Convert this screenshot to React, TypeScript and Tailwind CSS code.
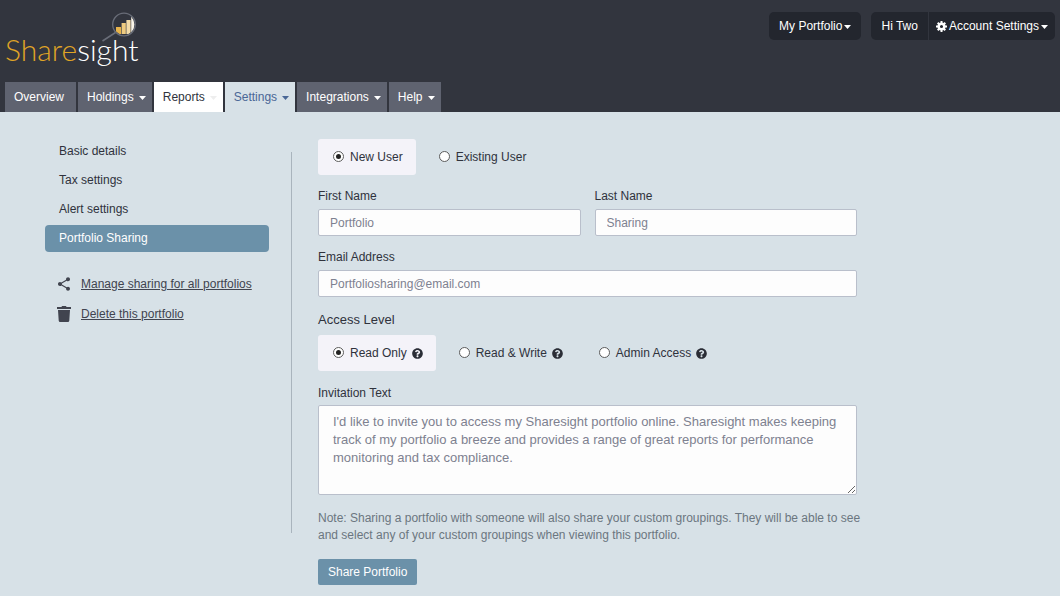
import { useState } from "react";
import type { ReactNode } from "react";
import clsx from "clsx";
import { FaQuestionCircle } from "react-icons/fa";
import { MdShare } from "react-icons/md";

const tabs = [
  { label: "Overview", caret: false },
  { label: "Holdings", caret: true },
  { label: "Reports", caret: true },
  { label: "Settings", caret: true },
  { label: "Integrations", caret: true },
  { label: "Help", caret: true },
];

const menuItems = [
  "Basic details",
  "Tax settings",
  "Alert settings",
  "Portfolio Sharing",
];

const invitation =
  "I'd like to invite you to access my Sharesight portfolio online. Sharesight makes keeping track of my portfolio a breeze and provides a range of great reports for performance monitoring and tax compliance.";

const Caret = ({ className = "text-white" }: { className?: string }) => (
  <svg width="7" height="4" viewBox="0 0 7 4" fill="currentColor" className={className}>
    <path d="M0 0h7L3.5 4z" />
  </svg>
);

const Logo = () => (
  <a
    href="#"
    aria-label="Sharesight"
    className="relative block w-36 pt-[31px] pb-px font-['Lato',sans-serif] text-[30px] leading-9 font-light text-white"
  >
    <span className="text-[#e0a526]">Share</span>sight
    <svg
      className="absolute top-3 left-24"
      width="36"
      height="30"
      viewBox="0 0 36 30"
      fill="none"
    >
      <clipPath id="lens">
        <circle cx="23" cy="12.5" r="10.5" />
      </clipPath>
      <g clipPath="url(#lens)">
        <path d="M15 15h5v7h-5z" fill="#e8b44c" />
        <path d="M20.6 11h4.2v11h-4.2z" fill="#eecb80" />
        <path d="M25.4 8h4.2v14h-4.2z" fill="#f3dca8" />
        <path d="M30.2 5h4v17h-4z" fill="#fbf6e8" />
      </g>
      <circle cx="23" cy="12.5" r="11.3" stroke="#696d78" strokeWidth="1.3" />
      <path d="M14.5 20.5 1.5 29" stroke="#696d78" strokeWidth="1.5" />
    </svg>
  </a>
);

const GearIcon = () => (
  <svg width="11" height="11" viewBox="0 0 22 22" fill="none" stroke="currentColor">
    <circle cx="11" cy="11" r="5.6" strokeWidth="5" />
    <path
      d="M11 0v4M11 18v4M0 11h4M18 11h4M3.4 3.4l2.8 2.8M15.8 15.8l2.8 2.8M3.4 18.6l2.8-2.8M15.8 6.2l2.8-2.8"
      strokeWidth="4"
    />
  </svg>
);

const TrashIcon = () => (
  <svg width="14" height="16" viewBox="0 0 14 16" fill="currentColor">
    <path d="M0 1h4.3l.9-1h3.6l.9 1H14v2H0zM1 4h12l-.7 10.5c0 .9-.6 1.5-1.5 1.5H3.2c-.9 0-1.5-.6-1.5-1.5z" />
  </svg>
);

interface ChoiceProps {
  name: string;
  label: string;
  checked: boolean;
  onSelect: () => void;
  help?: boolean;
}

const Choice = ({ name, label, checked, onSelect, help }: ChoiceProps) => (
  <label
    className={clsx(
      "flex h-9 items-center rounded-[3px] pr-[13px] pl-[15px]",
      checked && "bg-[#f4f3f9]",
    )}
  >
    <input
      type="radio"
      name={name}
      checked={checked}
      onChange={onSelect}
      className="mr-1.5 mb-0.5 grid size-[11px] appearance-none place-items-center rounded-full border border-[#5c5c5c] bg-white before:size-[5px] before:rounded-full checked:before:bg-[#222]"
    />
    {label}
    {help && <FaQuestionCircle className="ml-[5px] size-[11px] text-[#2a2d36]" />}
  </label>
);

interface FieldProps {
  id: string;
  label: string;
  value: string;
  type?: string;
}

const Field = ({ id, label, value, type = "text" }: FieldProps) => (
  <div className="flex min-w-0 flex-1 flex-col gap-1">
    <label htmlFor={id}>{label}</label>
    <input
      id={id}
      type={type}
      defaultValue={value}
      className="h-[27px] w-full rounded-xs border border-[#b9bfcb] bg-[#fdfdfd] px-[11px] text-[#7e8190]"
    />
  </div>
);

const TopButton = ({ children, className }: { children: ReactNode; className?: string }) => (
  <button
    type="button"
    className={clsx(
      "flex h-7 items-center bg-[#23262e] text-white",
      className,
    )}
  >
    {children}
  </button>
);

const App = () => {
  const [activeItem, setActiveItem] = useState("Portfolio Sharing");
  const [userType, setUserType] = useState("New User");
  const [access, setAccess] = useState("Read Only");

  return (
    <div className="min-h-screen bg-[#d7e1e7] font-['Liberation_Sans',Arial,sans-serif] text-xs leading-[18px] text-[#2f323c]">
      <header className="bg-[#32353e]">
        <div className="flex items-start justify-between px-[5px]">
          <Logo />
          <div className="flex gap-2.5 pt-3">
            <TopButton className="gap-0.5 rounded-[5px] px-2.5">
              My Portfolio
              <Caret className="mt-0.5" />
            </TopButton>
            <div className="flex gap-px">
              <TopButton className="rounded-l-[5px] px-2.5">Hi Two</TopButton>
              <TopButton className="gap-0.5 rounded-r-[5px] px-[7px]">
                <GearIcon />
                Account Settings
                <Caret className="mt-0.5" />
              </TopButton>
            </div>
          </div>
        </div>
        <nav className="mt-3.5 flex gap-0.5 px-[5px]">
          {tabs.map((tab) => (
            <a
              key={tab.label}
              href="#"
              className={clsx(
                "flex h-[30px] items-center gap-[5px] pl-[9px]",
                tab.caret ? "pr-1.5" : "pr-3",
                tab.label === "Reports" && "bg-white text-[#2f323c]",
                tab.label === "Settings" && "bg-[#d7e1e7] text-[#4a6796]",
                tab.label !== "Reports" &&
                  tab.label !== "Settings" &&
                  "bg-[#5f6370] text-white",
              )}
            >
              {tab.label}
              {tab.caret && (
                <Caret
                  className={clsx(
                    "mt-0.5",
                    tab.label === "Reports" && "text-[#eeeeee]",
                  )}
                />
              )}
            </a>
          ))}
        </nav>
      </header>

      <main className="flex pt-[27px] pr-5 pb-[11px] pl-[45px]">
        <aside className="-mt-px w-56 shrink-0">
          <ul className="flex flex-col gap-0.5">
            {menuItems.map((item) => (
              <li key={item}>
                <a
                  href="#"
                  onClick={() => setActiveItem(item)}
                  className={clsx(
                    "flex h-[27px] items-center rounded-sm px-3.5 pb-0.5",
                    item === activeItem && "bg-[#6b91a9] text-white",
                  )}
                >
                  {item}
                </a>
              </li>
            ))}
          </ul>
          <div className="mt-[23px] flex flex-col gap-3 pl-3 text-[#41444f]">
            <a href="#" className="flex items-center gap-2.5">
              <MdShare className="size-3.5 scale-115" />
              <span className="underline">Manage sharing for all portfolios</span>
            </a>
            <a href="#" className="flex items-center gap-2.5">
              <TrashIcon />
              <span className="underline">Delete this portfolio</span>
            </a>
          </div>
        </aside>

        <div className="mx-[22px] mt-[13px] mb-[52px] w-px shrink-0 bg-[#a9b4bd]" />

        <form
          className="ml-1 w-full max-w-[539px] min-w-0"
          onSubmit={(e) => e.preventDefault()}
        >
          <div className="flex gap-2">
            {["New User", "Existing User"].map((label) => (
              <Choice
                key={label}
                name="user"
                label={label}
                checked={userType === label}
                onSelect={() => setUserType(label)}
              />
            ))}
          </div>

          <div className="mt-3 flex gap-3.5">
            <Field id="first-name" label="First Name" value="Portfolio" />
            <Field id="last-name" label="Last Name" value="Sharing" />
          </div>
          <div className="mt-3 flex">
            <Field
              id="email"
              label="Email Address"
              value="Portfoliosharing@email.com"
              type="email"
            />
          </div>

          <fieldset className="mt-3.5">
            <legend className="mb-1.5 text-[13px] leading-[18px]">Access Level</legend>
            <div className="flex gap-2">
              {["Read Only", "Read & Write", "Admin Access"].map((label) => (
                <Choice
                  key={label}
                  name="access"
                  label={label}
                  checked={access === label}
                  onSelect={() => setAccess(label)}
                  help
                />
              ))}
            </div>
          </fieldset>

          <div className="mt-[13px] flex flex-col gap-[3px]">
            <label htmlFor="invitation">Invitation Text</label>
            <textarea
              id="invitation"
              defaultValue={invitation}
              className="h-[90px] w-full rounded-xs border border-[#b9bfcb] bg-[#fdfdfd] px-3.5 py-[7px] text-[13px] leading-[18px] text-[#7e8190]"
            />
          </div>

          <p className="mt-[15px] -mr-3 leading-[17px] text-[#6b7680]">
            Note: Sharing a portfolio with someone will also share your custom
            groupings. They will be able to see and select any of your custom
            groupings when viewing this portfolio.
          </p>
          <button
            type="submit"
            className="mt-[15px] h-[26px] rounded-xs bg-[#6b91a9] px-2.5 text-white"
          >
            Share Portfolio
          </button>
        </form>
      </main>
    </div>
  );
};

export default App;
